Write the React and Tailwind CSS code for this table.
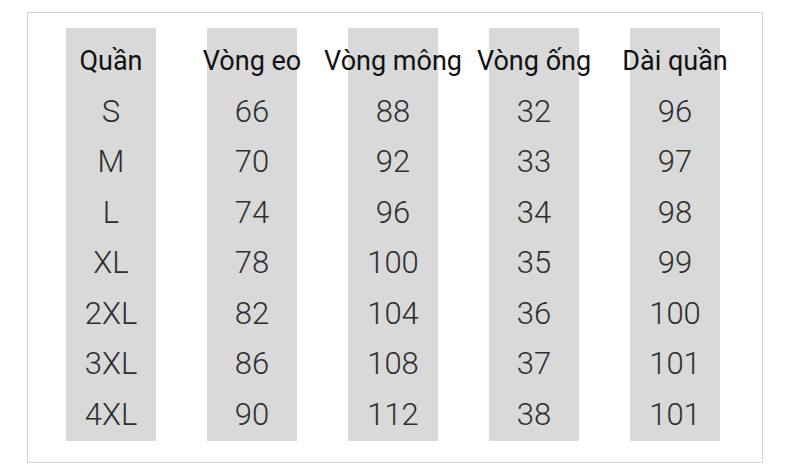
import React from 'react';

const columns = [
    { title: 'Quần', values: ['S', 'M', 'L', 'XL', '2XL', '3XL', '4XL'] },
    { title: 'Vòng eo', values: ['66', '70', '74', '78', '82', '86', '90'] },
    { title: 'Vòng mông', values: ['88', '92', '96', '100', '104', '108', '112'] },
    { title: 'Vòng ống', values: ['32', '33', '34', '35', '36', '37', '38'] },
    { title: 'Dài quần', values: ['96', '97', '98', '99', '100', '101', '101'] },
];

function SizeColumn({ title, values }) {
    return (
        <div className="w-[90px] h-[413px] bg-[#d9d9d9] flex flex-col pt-[8px]">
            <div className="h-[50.5px] flex items-center justify-center whitespace-nowrap text-[27px] text-[#111]">
                {title}
            </div>
            {values.map((v, i) => (
                <div key={i} className="h-[50.5px] flex items-center justify-center text-[31px] font-light text-[#2e2e2e]">
                    {v}
                </div>
            ))}
        </div>
    );
}

export default function App() {
    return (
        <div className="w-[790px] h-[476px] bg-white pt-[12px] pl-[27px]" style={{ fontFamily: 'Roboto, "Noto Sans", sans-serif' }}>
            <div className="w-[736px] h-[451px] border border-[#d4d4d4] pt-[15px] pl-[38px] flex gap-[51px]">
                {columns.map((c) => (
                    <SizeColumn key={c.title} title={c.title} values={c.values} />
                ))}
            </div>
        </div>
    );
}
